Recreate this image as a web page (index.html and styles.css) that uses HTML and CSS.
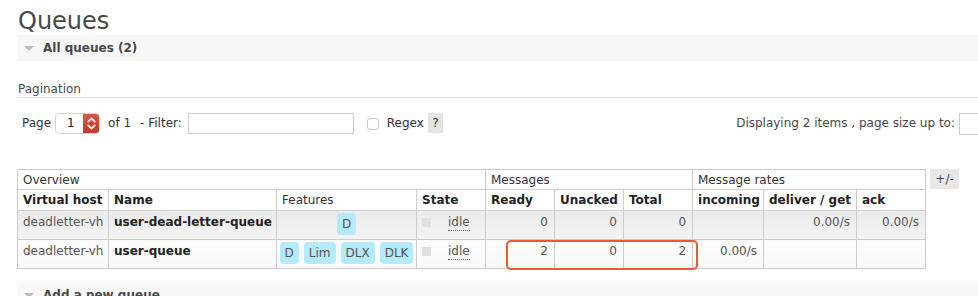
FILE: index.html
```html
<!DOCTYPE html>
<html>
<head>
<meta charset="utf-8">
<title>Queues</title>
<link rel="stylesheet" href="styles.css">
</head>
<body>
<div class="page">
  <h1 class="title">Queues</h1>
  <div class="section">
    <div class="section-head"><span class="tri"></span>All queues (2)</div>
    <div class="section-body">
      <h3 class="pag-title">Pagination</h3>
      <div class="pag-row">
        <div class="pag-left">
          <span class="lbl">Page</span>
          <span class="select"><span class="sel-val">1</span><span class="sel-arrow"><svg width="17" height="21" viewBox="0 0 17 21"><path d="M5.2 8.6 L8.5 5.4 L11.8 8.6 M5.2 12.4 L8.5 15.6 L11.8 12.4" fill="none" stroke="#fff" stroke-width="1.6" stroke-linecap="round" stroke-linejoin="round"/></svg></span></span>
          <span class="of">of 1</span>
          <span class="flt">- Filter:</span>
          <input class="filter" type="text">
          <input class="chk" type="checkbox">
          <span class="regex">Regex</span>
          <span class="help">?</span>
        </div>
        <div class="pag-right">
          <span>Displaying 2 items , page size up to:</span>
          <input class="psize" type="text">
        </div>
      </div>
      <div class="table-wrap">
        <table class="list">
          <colgroup>
            <col style="width:91px"><col style="width:168px"><col style="width:140px"><col style="width:69px">
            <col style="width:69px"><col style="width:69px"><col style="width:69px">
            <col style="width:71px"><col style="width:93px"><col style="width:69px">
          </colgroup>
          <thead>
            <tr class="group-row">
              <th colspan="4">Overview</th>
              <th colspan="3">Messages</th>
              <th colspan="3">Message rates</th>
            </tr>
            <tr class="head-row">
              <th>Virtual host</th>
              <th>Name</th>
              <th class="plain">Features</th>
              <th>State</th>
              <th>Ready</th>
              <th>Unacked</th>
              <th>Total</th>
              <th>incoming</th>
              <th>deliver / get</th>
              <th>ack</th>
            </tr>
          </thead>
          <tbody>
            <tr class="alt1">
              <td class="vh">deadletter-vh</td>
              <td class="name">user-dead-letter-queue</td>
              <td class="features"><div class="badges"><span class="badge">D</span></div></td>
              <td class="state"><div class="st"><span class="sq"></span><abbr class="idle">idle</abbr></div></td>
              <td class="num">0</td>
              <td class="num">0</td>
              <td class="num">0</td>
              <td class="num"></td>
              <td class="num">0.00/s</td>
              <td class="num">0.00/s</td>
            </tr>
            <tr class="alt2">
              <td class="vh">deadletter-vh</td>
              <td class="name">user-queue</td>
              <td class="features"><div class="badges"><span class="badge">D</span><span class="badge">Lim</span><span class="badge">DLX</span><span class="badge">DLK</span></div></td>
              <td class="state"><div class="st"><span class="sq"></span><abbr class="idle">idle</abbr></div></td>
              <td class="num">2</td>
              <td class="num">0</td>
              <td class="num">2</td>
              <td class="num">0.00/s</td>
              <td class="num"></td>
              <td class="num"></td>
            </tr>
          </tbody>
        </table>
        <span class="plusminus">+/-</span>
        <div class="highlight"></div>
      </div>
    </div>
  </div>
  <div class="section-head bottom"><span class="tri"></span>Add a new queue</div>
</div>
</body>
</html>
```
FILE: styles.css
```css
html, body {
  margin: 0;
  padding: 0;
  overflow: hidden;
  background: #fff;
}
body {
  font-family: "DejaVu Sans", Verdana, sans-serif;
  font-size: 12px;
  color: #484848;
}
.page {
  width: 972px;
  padding-left: 17px;
}
.title {
  margin: 7px 0 0 1px;
  font-size: 24px;
  line-height: 28px;
  font-weight: normal;
  color: #484848;
}
.section-head {
  height: 26px;
  display: flex;
  align-items: center;
  background: #f8f8f8;
  font-weight: bold;
  color: #484848;
  width: 1000px;
}
.tri {
  width: 0;
  height: 0;
  border-left: 5px solid transparent;
  border-right: 5px solid transparent;
  border-top: 5px solid #bbb;
  margin: 1px 9px 0 7px;
}
.pag-title {
  margin: 21px 0 0;
  padding: 0 0 1px 1px;
  font-size: 12px;
  line-height: 14px;
  font-weight: normal;
  border-bottom: 1px solid #ddd;
}
.pag-row {
  margin-top: 14px;
  height: 22px;
  display: flex;
  align-items: center;
  justify-content: space-between;
}
.pag-left {
  display: flex;
  align-items: center;
  padding-left: 5px;
  color: #333;
}
.select {
  display: flex;
  margin-left: 4px;
  height: 21px;
  width: 45px;
  border: 1px solid #d4d4d4;
  border-radius: 4px;
  box-sizing: border-box;
  background: #fff;
  overflow: hidden;
}
.sel-val {
  flex: 1;
  padding-left: 11px;
  line-height: 19px;
  color: #222;
}
.sel-arrow {
  width: 17px;
  margin: -1px -1px -1px 0;
  background: linear-gradient(#d65a45, #bd3a25);
  display: flex;
  align-items: center;
  justify-content: center;
}
.of {
  margin-left: 8px;
}
.flt {
  margin-left: 9px;
}
.filter {
  margin: 1px 0 0 6px;
  width: 166px;
  height: 21px;
  box-sizing: border-box;
  border: 1px solid #ccc;
  padding: 0;
}
.chk {
  appearance: none;
  -webkit-appearance: none;
  margin: 1px 0 0 13px;
  width: 12px;
  height: 12px;
  border: 1px solid #c8c8c8;
  border-radius: 3px;
  background: #fff;
  box-sizing: border-box;
}
.regex {
  margin-left: 8px;
}
.help {
  margin-left: 4px;
  width: 15px;
  height: 20px;
  line-height: 20px;
  text-align: center;
  background: #e4e4e4;
  color: #333;
}
.pag-right {
  display: flex;
  align-items: center;
  color: #484848;
}
.psize {
  margin: 2px 0 0 4px;
  width: 30px;
  height: 22px;
  box-sizing: border-box;
  border: 1px solid #ccc;
  padding: 0;
}
.table-wrap {
  position: relative;
  margin-top: 35px;
  display: flex;
  align-items: flex-start;
}
.list {
  border-collapse: collapse;
  table-layout: fixed;
  width: 909px;
}
.list th, .list td {
  border: 1px solid #ccc;
  padding: 0 5px;
  text-align: left;
  white-space: nowrap;
  overflow: hidden;
}
.group-row th {
  height: 19px;
  font-weight: normal;
  color: #333;
  background: #fff;
}
.head-row th {
  height: 20px;
  font-weight: bold;
  color: #222;
  background: #fff;
}
.head-row th.plain {
  font-weight: normal;
  color: #333;
}
.list td {
  height: 29px;
  vertical-align: top;
  padding-top: 4px;
  line-height: 15px;
  box-sizing: border-box;
  color: #555;
}
.alt1 td {
  background: linear-gradient(#ebebeb, #f3f3f3);
}
.alt2 td {
  background: linear-gradient(#fcfcfc, #f8f8f8);
}
.list td.name {
  font-weight: bold;
  color: #222;
}
.list td.num {
  text-align: right;
  padding-right: 6px;
}
.list td.features {
  padding: 2px 4px 0;
}
.badges {
  display: flex;
  justify-content: center;
  gap: 5px;
}
.badge {
  height: 22px;
  line-height: 22px;
  padding: 0 5px;
  border-radius: 4px;
  background: #b4eafc;
  color: #555;
}
.st {
  display: flex;
  align-items: flex-start;
}
.sq {
  width: 9px;
  height: 9px;
  background: #e0e0e0;
  margin-top: 3px;
}
.idle {
  margin-left: 17px;
  text-decoration: none;
  border-bottom: 1px dotted #666;
  line-height: 15px;
  color: #555;
}
.plusminus {
  margin-left: 4px;
  width: 29px;
  height: 20px;
  line-height: 20px;
  text-align: center;
  background: #e8e8e8;
  color: #444;
}
.highlight {
  position: absolute;
  left: 489px;
  top: 71px;
  width: 192px;
  height: 30px;
  border: 2.5px solid #ee5a30;
  border-radius: 5px;
  box-sizing: border-box;
  pointer-events: none;
}
.section-head.bottom {
  margin-top: 13px;
}
```
